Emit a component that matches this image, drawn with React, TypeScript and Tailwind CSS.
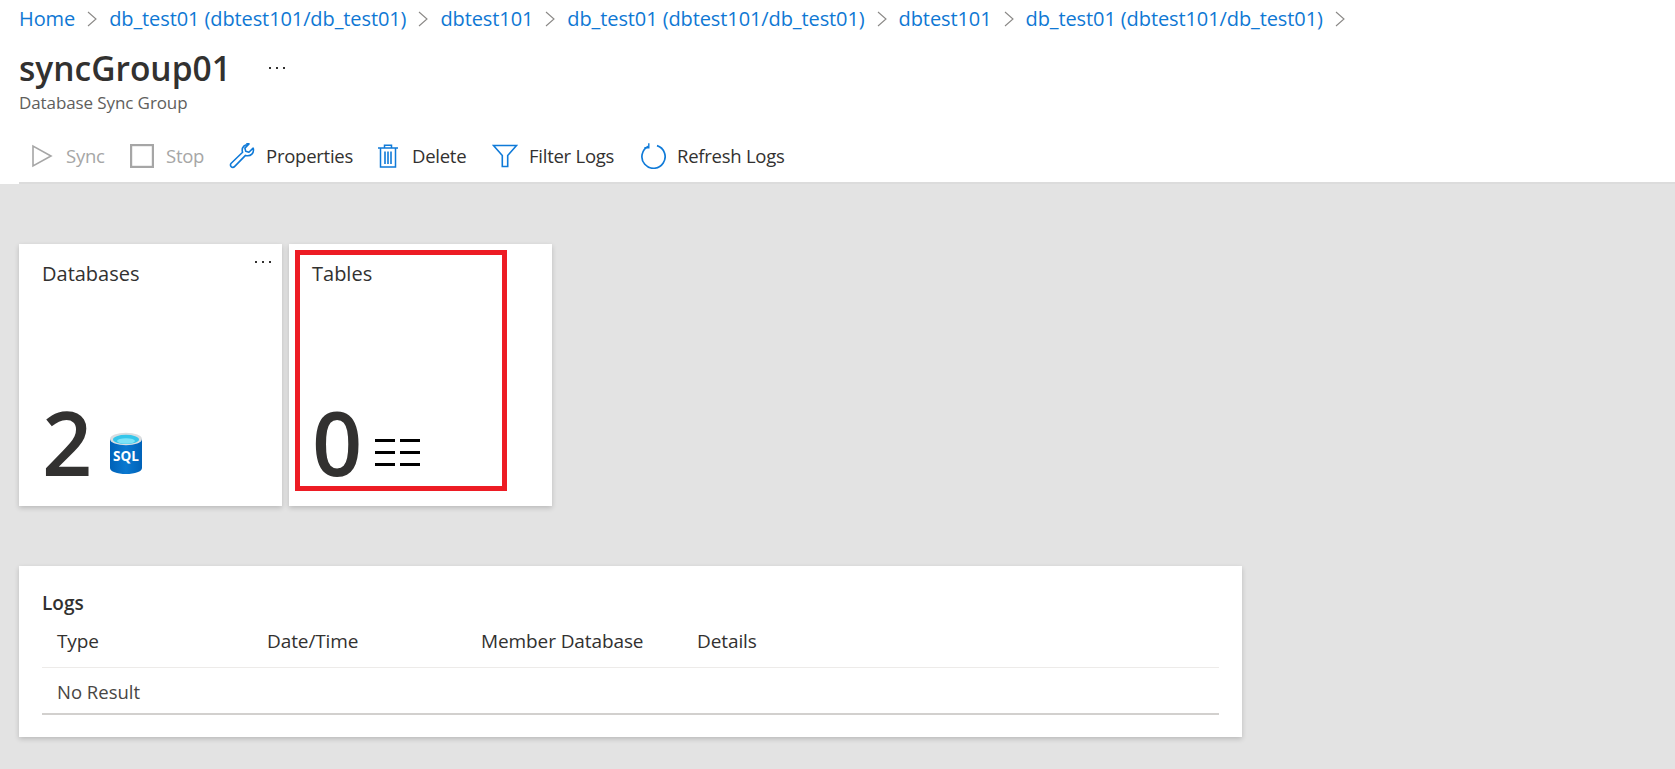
import React from 'react';

const crumbs = [
  'Home',
  'db_test01 (dbtest101/db_test01)',
  'dbtest101',
  'db_test01 (dbtest101/db_test01)',
  'dbtest101',
  'db_test01 (dbtest101/db_test01)',
];

const Chevron = () => (
  <svg width="10" height="16" viewBox="0 0 10 16" fill="none" stroke="#8a8886" strokeWidth="1.1">
    <path d="M1 1l8 7-8 7" />
  </svg>
);

const Dots = ({ color = '#323130' }: { color?: string }) => (
  <svg width="18" height="4" viewBox="0 0 18 4" fill={color}>
    <rect x="1" y="1" width="2" height="2" />
    <rect x="8" y="1" width="2" height="2" />
    <rect x="15" y="1" width="2" height="2" />
  </svg>
);

const PlayIcon = () => (
  <svg width="22" height="24" viewBox="0 0 22 24" fill="none" stroke="#a6a6a6" strokeWidth="1.6">
    <path d="M2 2v20l18-10z" />
  </svg>
);

const StopIcon = () => (
  <svg width="24" height="24" viewBox="0 0 24 24" fill="none" stroke="#a6a6a6" strokeWidth="2.2">
    <rect x="1.1" y="1.1" width="21.8" height="21.8" />
  </svg>
);

const WrenchIcon = () => (
  <svg width="26" height="26" viewBox="0 0 26 26" fill="none" stroke="#0f7ad8" strokeWidth="1.6" strokeLinejoin="round">
    <path d="M19 1.5c-3.3 0-5.8 2.6-5.8 5.7 0 .8.1 1.4.4 2L2.2 20.3c-1 1.1-1 2.5 0 3.4.9.9 2.4.9 3.3-.1l11-11.2c.7.3 1.5.4 2.3.4 3.2 0 5.7-2.5 5.7-5.7 0-.8-.1-1.4-.4-2l-4.2 4.1-3.2-.9-.8-3.2 4.1-4.2c-.6-.3-1.2-.4-2-.4z" />
  </svg>
);

const TrashIcon = () => (
  <svg width="20" height="24" viewBox="0 0 20 24" fill="none" stroke="#0f7ad8" strokeWidth="1.5">
    <path d="M0 4h20M6.5 4V1.200h7V4M2.500 4v19h15V4" />
    <path d="M7 7.500v12.500M10 7.500v12.500M13 7.500v12.500" strokeWidth="1.6" />
  </svg>
);

const FilterIcon = () => (
  <svg width="26" height="24" viewBox="0 0 26 24" fill="none" stroke="#0f7ad8" strokeWidth="1.6">
    <path d="M1.500 1.500h23l-8.800 10V22.500h-5.400V11.500z" />
  </svg>
);

const RefreshIcon = () => (
  <svg width="26" height="26" viewBox="0 0 26 26" fill="none" stroke="#0f7ad8" strokeWidth="1.7">
    <path d="M8.500 3.200A11.600 11.600 0 1 0 17 2.600" />
    <path d="M8.800 0.300v4.400H4.400" strokeWidth="1.4" />
  </svg>
);

const SqlIcon = () => (
  <svg width="34" height="43" viewBox="0 0 34 43">
    <defs>
      <linearGradient id="sqlBody" x1="0" x2="1" y1="0" y2="0">
        <stop offset="0" stopColor="#0062b8" />
        <stop offset="0.5" stopColor="#0a78d0" />
        <stop offset="1" stopColor="#0062b8" />
      </linearGradient>
    </defs>
    <path d="M1 7v29c0 3.500 7 6 16 6s16-2.500 16-6V7z" fill="url(#sqlBody)" />
    <ellipse cx="17" cy="7" rx="16" ry="6.200" fill="#d9dde0" />
    <ellipse cx="17" cy="7.400" rx="13" ry="4.600" fill="#35c6ea" />
    <ellipse cx="17" cy="9" rx="9" ry="2.800" fill="#7de3f7" />
    <text x="17" y="29" textAnchor="middle" fontSize="13.500" fontWeight="700" fill="#fff" fontFamily="'Open Sans', sans-serif">SQL</text>
  </svg>
);

const TableIcon = () => (
  <svg width="46" height="28" viewBox="0 0 46 28" fill="#000">
    <rect x="0" y="0" width="20" height="3" />
    <rect x="25" y="0" width="20" height="3" />
    <rect x="0" y="12" width="20" height="3" />
    <rect x="25" y="12" width="20" height="3" />
    <rect x="0" y="24" width="20" height="3" />
    <rect x="25" y="24" width="20" height="3" />
  </svg>
);

const tools = [
  { label: 'Sync', icon: <PlayIcon />, off: true, w: 'w-[100px]' },
  { label: 'Stop', icon: <StopIcon />, off: true, w: 'w-[100px]' },
  { label: 'Properties', icon: <WrenchIcon />, off: false, w: 'w-[146px]' },
  { label: 'Delete', icon: <TrashIcon />, off: false, w: 'w-[117px]' },
  { label: 'Filter Logs', icon: <FilterIcon />, off: false, w: 'w-[148px]' },
  { label: 'Refresh Logs', icon: <RefreshIcon />, off: false, w: 'w-[160px]' },
];

const Tile = ({ title, value, icon, dots }: { title: string; value: string; icon: React.ReactNode; dots?: boolean }) => (
  <div className="relative flex h-[262px] w-[263px] flex-col justify-between bg-white pb-[15px] pl-[23px] shadow-[0_2px_5px_rgba(0,0,0,0.18)]">
    <div className="pt-[17px] text-[20px] leading-[26px] text-[#323130]">{title}</div>
    <div className="flex h-[98px] items-end">
      <span className="text-[88px] font-semibold leading-[98px] text-[#323130]">{value}</span>
      {icon}
    </div>
    {dots && (
      <div className="absolute right-[10px] top-[16px]">
        <Dots />
      </div>
    )}
  </div>
);

export default function App() {
  return (
    <div className="flex h-[769px] w-[1675px] flex-col overflow-hidden bg-[#e3e3e3] font-['Open_Sans',sans-serif]">
      <header className="h-[184px] shrink-0 bg-white pl-[19px]">
        <nav className="flex h-[38px] items-center text-[20px] tracking-[-0.1px] text-[#0f78d4]">
          {crumbs.map((c, i) => (
            <React.Fragment key={i}>
              <span>{c}</span>
              <span className="mx-[12px] flex items-center">
                <Chevron />
              </span>
            </React.Fragment>
          ))}
        </nav>
        <div className="mt-[5px] flex h-[50px] items-center">
          <h1 className="text-[33.500px] font-semibold leading-[50px] text-[#323130]">syncGroup01</h1>
          <span className="ml-[37px] flex items-center">
            <Dots />
          </span>
        </div>
        <div className="text-[17px] leading-[20px] tracking-[-0.1px] text-[#605e5c]">Database Sync Group</div>
        <div className="mt-[16px] flex h-[55px] items-center border-b-2 border-[#dcdcdc] pl-[10px]">
          {tools.map((t) => (
            <div key={t.label} className={`flex items-center ${t.w}`}>
              <span className="flex w-[26px] shrink-0 justify-center">{t.icon}</span>
              <span className={`ml-[11px] text-[18.500px] tracking-[-0.25px] ${t.off ? 'text-[#a6a6a6]' : 'text-[#323130]'}`}>
                {t.label}
              </span>
            </div>
          ))}
        </div>
      </header>

      <main className="px-[19px] pt-[60px]">
        <div className="flex gap-[7px]">
          <Tile
            title="Databases"
            value="2"
            dots
            icon={
              <span className="mb-[16px] ml-[17px]">
                <SqlIcon />
              </span>
            }
          />
          <Tile
            title="Tables"
            value="0"
            icon={
              <span className="mb-[24px] ml-[13px]">
                <TableIcon />
              </span>
            }
          />
        </div>

        <section className="mt-[60px] h-[171px] w-[1223px] bg-white px-[23px] pt-[25px] shadow-[0_2px_5px_rgba(0,0,0,0.18)]">
          <div className="text-[19px] font-semibold leading-[24px] text-[#323130]">Logs</div>
          <div className="grid h-[53px] grid-cols-[210px_214px_216px_1fr] items-center border-b border-[#edebe9] pl-[15px] pt-[1px] text-[19px] tracking-[-0.1px] text-[#323130]">
            <span>Type</span>
            <span>Date/Time</span>
            <span>Member Database</span>
            <span>Details</span>
          </div>
          <div className="flex h-[47px] items-center border-b-2 border-[#d2d0ce] pl-[15px] pt-[2px] text-[18.500px] text-[#484644]">
            No Result
          </div>
        </section>
      </main>

      {/* annotation drawn over the Tables tile */}
      <div className="absolute left-[295px] top-[250px] h-[241px] w-[212px] border-[5px] border-[#ed1c24]" />
    </div>
  );
}
